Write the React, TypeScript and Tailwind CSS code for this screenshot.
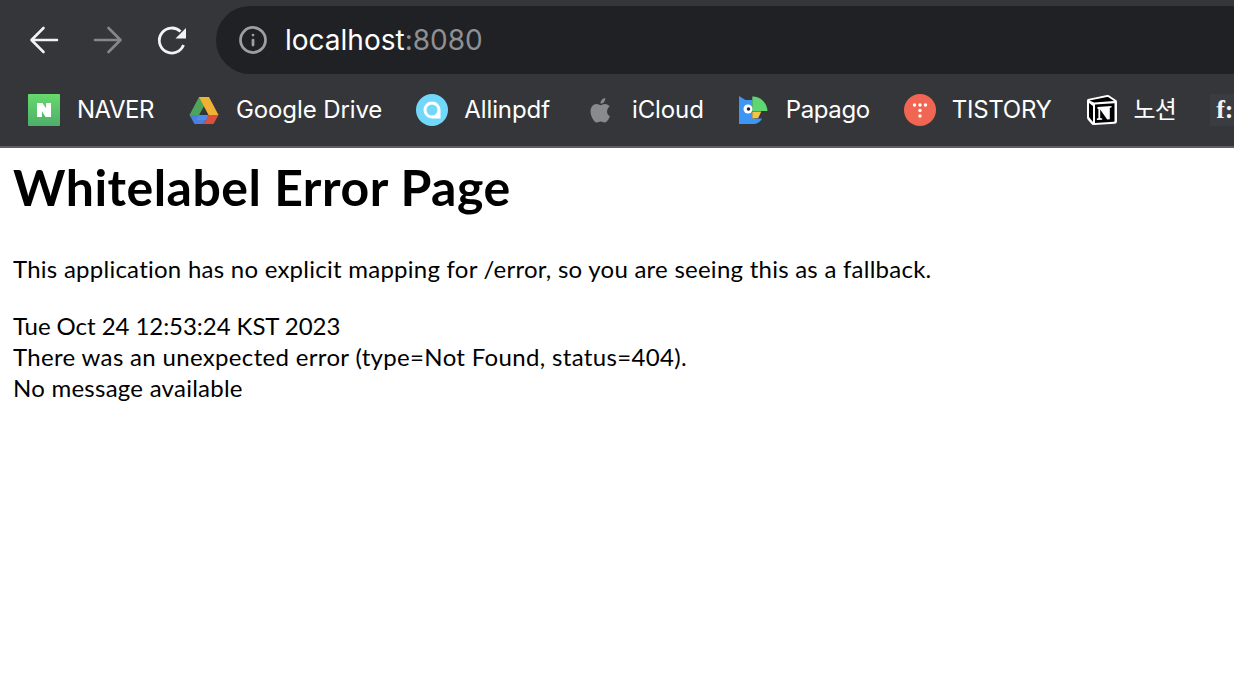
import { Info } from 'lucide-react';

function NaverIcon() {
  return (
    <svg width="32" height="32" viewBox="0 0 32 32">
      <defs>
        <linearGradient id="nv" x1="0" y1="0" x2="0" y2="1">
          <stop offset="0" stopColor="#66d96c" />
          <stop offset="1" stopColor="#4fae69" />
        </linearGradient>
      </defs>
      <rect width="32" height="32" rx="1" fill="url(#nv)" />
      <path d="M9 9h5.500l3.600 5.600V9H23v14h-5.400l-3.700-5.700V23H9z" fill="#fff" />
    </svg>
  );
}

function DriveIcon() {
  return (
    <svg width="32" height="32" viewBox="0 0 32 32">
      <path d="M11 3h10l-5.200 9.400L11 21H1.500z" fill="#4fa45c" />
      <path d="M11 3h10l-5 9z" fill="#3d8f58" />
      <path d="M21 3l9.500 18H20.500L11 3z" fill="#f1b233" />
      <path d="M6.500 30L1.500 21h19l-5 9z" fill="#4a7fe0" />
      <path d="M20.500 21h10l-5 9h-10z" fill="#d9503f" />
      <path d="M11 21h9.500l-2.500 5H8z" fill="#4d8bec" />
    </svg>
  );
}

function AllinpdfIcon() {
  return (
    <svg width="32" height="32" viewBox="0 0 32 32">
      <circle cx="16" cy="16" r="16" fill="#72d8fb" />
      <path d="M16 7.500a8.500 8.500 0 1 0 0 17h8.500V16A8.500 8.500 0 0 0 16 7.500z" fill="#fff" />
      <circle cx="16" cy="16" r="5.500" fill="#72d8fb" />
    </svg>
  );
}

function AppleIcon() {
  return (
    <svg width="32" height="32" viewBox="0 0 32 32">
      <g transform="translate(-3.500 -3.500) scale(1.220)">
        <path
          d="M21.800 16.900c0-2.500 2-3.700 2.100-3.800-1.200-1.700-3-1.900-3.600-2-1.500-.2-3 .9-3.800.9s-2-.9-3.300-.9c-1.700 0-3.300 1-4.100 2.500-1.800 3.100-.5 7.600 1.200 10.100.8 1.200 1.800 2.600 3.100 2.500 1.300 0 1.700-.8 3.200-.8s1.900.8 3.200.8c1.400 0 2.200-1.200 3-2.400.9-1.400 1.300-2.700 1.300-2.800-.1 0-2.300-.9-2.300-3.600z"
          fill="#8a8a8c"
        />
        <path d="M19.300 9.400c.7-.8 1.100-2 1-3.200-1 0-2.200.7-2.900 1.500-.6.700-1.200 1.900-1 3 1.100.1 2.200-.5 2.900-1.300z" fill="#8a8a8c" />
      </g>
    </svg>
  );
}

function PapagoIcon() {
  return (
    <svg width="32" height="32" viewBox="0 0 32 32">
      <path d="M1 2l6.500 4h6.800v18.500H24c-1.500 3.500-5 5.500-9 5.500H1z" fill="#3e96f4" />
      <path d="M14.300 2.500A15 15 0 0 1 29.500 17H14.300z" fill="#5fd672" />
      <path d="M14.300 17.500h9l-3 6.500-6 .5z" fill="#f6c343" />
      <circle cx="10" cy="15" r="4.500" fill="#fff" />
      <circle cx="10.500" cy="15" r="1.800" fill="#23272c" />
    </svg>
  );
}

function TistoryIcon() {
  return (
    <svg width="32" height="32" viewBox="0 0 32 32">
      <circle cx="16" cy="16" r="16" fill="#f06652" />
      <g fill="#fff">
        <circle cx="10.500" cy="11" r="1.700" />
        <circle cx="16" cy="11" r="1.700" />
        <circle cx="21.500" cy="11" r="1.700" />
        <circle cx="16" cy="16.500" r="1.700" />
        <circle cx="16" cy="22" r="1.700" />
      </g>
    </svg>
  );
}

function NotionIcon() {
  return (
    <svg width="32" height="32" viewBox="0 0 32 32">
      <path d="M2 5L21 1c.800-.100 1.500 0 2.200.500L30 6c.700.500 1 1 1 1.800V27c0 1.500-.700 2.700-2.300 2.800L8 31c-1 0-1.700-.200-2.500-1.100l-3.500-4C1.300 25 1 24.200 1 23.200V7c0-1 .300-1.600 1-2z" fill="#fff" />
      <path d="M3.500 6.500L21 3c.800-.100 1.200 0 1.800.400l5.200 3.600L8 8.500zM3 9l4 3v16l-3.300-4c-.400-.500-.700-1-.700-1.600z" fill="#000" />
      <path d="M9 10.500l19.500-1.300V27c0 .500-.200.800-.800.800L9 29z" fill="#000" />
      <path d="M11.500 13l14-1v1.500l-1.700.300v11.500l-2.600.200-7-10v8.500l2 .400v1.300l-5.300.300v-1.500l1.500-.300V15l-1-.200z" fill="#fff" />
    </svg>
  );
}

function BackIcon() {
  return (
    <svg width="36" height="36" viewBox="0 0 36 36" fill="none" stroke="#f1f3f4" strokeWidth="2.600" strokeLinecap="round" strokeLinejoin="round">
      <path d="M31 18H6M17.500 6L5.500 18l12 12" />
    </svg>
  );
}

function ForwardIcon() {
  return (
    <svg width="36" height="36" viewBox="0 0 36 36" fill="none" stroke="#85878a" strokeWidth="2.600" strokeLinecap="round" strokeLinejoin="round">
      <path d="M5 18h25M18.500 6l12 12-12 12" />
    </svg>
  );
}

function ReloadIcon() {
  return (
    <svg width="36" height="36" viewBox="0 0 36 36">
      <path d="M29.500 23A12.500 12.500 0 1 1 26.500 9.500" fill="none" stroke="#f1f3f4" strokeWidth="2.800" />
      <path d="M32 6v10.500H21.500z" fill="#f1f3f4" />
    </svg>
  );
}

const bookmarks = [
  { label: 'NAVER', icon: <NaverIcon />, text: 'ml-[1px] tracking-[-0.5px]' },
  { label: 'Google Drive', icon: <DriveIcon />, text: 'tracking-[-0.1px]' },
  { label: 'Allinpdf', icon: <AllinpdfIcon />, text: 'tracking-[-0.1px]' },
  { label: 'iCloud', icon: <AppleIcon />, text: 'tracking-[-0.1px]' },
  { label: 'Papago', icon: <PapagoIcon />, text: 'tracking-[-0.4px]' },
  { label: 'TISTORY', icon: <TistoryIcon />, text: 'tracking-[-0.25px]' },
  { label: '노션', icon: <NotionIcon />, text: 'tracking-[-0.8px]' },
];

export default function App() {
  return (
    <div className="h-[674px] w-[1234px] overflow-hidden bg-white">
      <div className="h-[148px] border-b-2 border-[#5e5f63] bg-[#35363a] font-['Inter','Noto_Sans_CJK_KR',sans-serif] text-white">
        <div className="flex h-[80px] items-start pt-[6px]">
          <div className="flex h-[68px] w-[216px] shrink-0 items-center pl-[26px]">
            <BackIcon />
            <div className="ml-[28px]">
              <ForwardIcon />
            </div>
            <div className="ml-[28px]">
              <ReloadIcon />
            </div>
          </div>
          <div className="flex h-[68px] flex-1 items-center rounded-l-[34px] bg-[#202124] pl-[22px]">
            <Info size={30} strokeWidth={2.2} className="text-[#9aa0a6]" />
            <span className="ml-[17px] text-[28px] leading-none text-white">
              localhost<span className="text-[#8e9094]">:8080</span>
            </span>
          </div>
        </div>
        <div className="flex h-[66px] items-center gap-[34px] pb-[7px] pl-[28px]">
          {bookmarks.map((b) => (
            <div key={b.label} className="flex shrink-0 items-center gap-[16px]">
              {b.icon}
              <span className={`text-[24px] leading-none ${b.text}`}>{b.label}</span>
            </div>
          ))}
          <div className="min-w-0 flex-1 bg-[#3b3c42] pl-[6px] font-['Liberation_Serif',serif] text-[26px] leading-[32px] font-bold whitespace-nowrap text-[#f1f3f4]">
            f:
          </div>
        </div>
      </div>
      <div className="px-[13px] font-['Lato',sans-serif] text-[24px] text-black">
        <h1 className="mt-[9px] text-[50px] leading-[60px] font-bold tracking-[0.5px]">Whitelabel Error Page</h1>
        <p className="mt-[36px] leading-[31px] tracking-[0.25px]">
          This application has no explicit mapping for /error, so you are seeing this as a fallback.
        </p>
        <div className="mt-[26px] leading-[31px]">
          <div className="tracking-[-0.06px]">Tue Oct 24 12:53:24 KST 2023</div>
          <div className="tracking-[0.33px]">There was an unexpected error (type=Not Found, status=404).</div>
          <div className="tracking-[0.25px]">No message available</div>
        </div>
      </div>
    </div>
  );
}
